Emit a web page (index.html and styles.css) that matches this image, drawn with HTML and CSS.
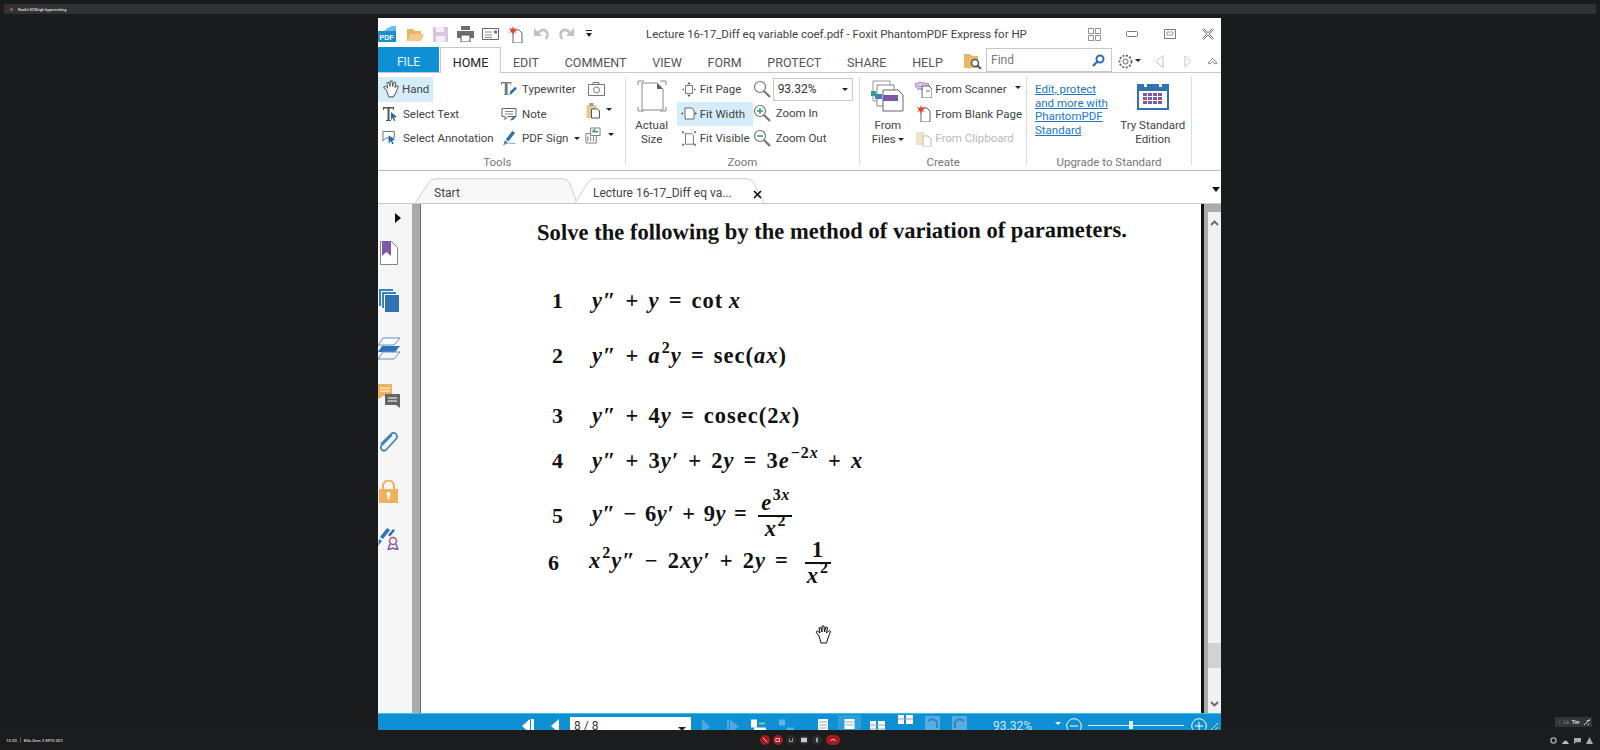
FILE: index.html
```html
<!DOCTYPE html>
<html lang="en">
<head>
    <meta charset="UTF-8">
    <title>Foxit PhantomPDF screen share</title>
    <link rel="stylesheet" href="styles.css">
</head>
<body>
    <div class="meeting-top"><span class="rec-dot"></span><span class="meeting-name">Rachit ECEhigh hypersetting</span></div>

    <div class="stage">
        <div class="window">
            <div class="titlebar">
                <svg class="qa logo" viewBox="0 0 18 16"><path d="M0 5 L10 5 L18 0 L18 16 L0 16Z" fill="#1b8fd0"/><path d="M6 5 Q10 1 14 0 L18 0 L18 5Z" fill="#6fc0e8"/><text x="1.5" y="14" class="logo-text">PDF</text></svg>
                <svg class="qa open" viewBox="0 0 18 16"><path d="M1 3h6l2 2h6v3H5l-3 7H1Z" fill="#e9b566"/><path d="M5 8h13l-3 7H2Z" fill="#f2c98a"/></svg>
                <svg class="qa save" viewBox="0 0 15 16"><path d="M0 1h15v15H0Z" fill="#d9c6de"/><path d="M3 1h8v5H3ZM3 10h9v6H3Z" fill="#f4eef6"/></svg>
                <svg class="qa print" viewBox="0 0 17 16"><path d="M4 0h9v4H4ZM0 5h17v7H0Z" fill="#6d6d6d"/><path d="M4 9h9v7H4Z" fill="#fff" stroke="#555"/></svg>
                <svg class="qa mail" viewBox="0 0 17 14"><path d="M.5 1.500h16v11H.5Z" fill="#fff" stroke="#666"/><path d="M3 5h7M3 8h7M3 10.500h7" stroke="#888"/><path d="M12 3.500h3v3h-3Z" fill="#777"/></svg>
                <svg class="qa new" viewBox="0 0 15 17"><path d="M5 4h6l3 3v10H5Z" fill="#fff" stroke="#666"/><path d="M5 0l1 3 3-1-2 3 2 2-3-1-1 3-1-3-3 1 2-2-2-3 3 1Z" fill="#e2412e"/></svg>
                <svg class="qa undo" viewBox="0 0 17 15"><path d="M5 6 Q9 1 13 4 Q16 7 13 12" fill="none" stroke="#bcc3c9" stroke-width="2.500"/><path d="M1 1v8h8Z" fill="#bcc3c9"/></svg>
                <svg class="qa redo" viewBox="0 0 17 15"><path d="M12 6 Q8 1 4 4 Q1 7 4 12" fill="none" stroke="#bcc3c9" stroke-width="2.500"/><path d="M16 1v8H8Z" fill="#bcc3c9"/></svg>
                <svg class="qa more" viewBox="0 0 6 8"><path d="M0 0h6v1H0ZM0 3h6L3 7Z" fill="#222"/></svg>
                <div class="window-title">Lecture 16-17_Diff eq variable coef.pdf - Foxit PhantomPDF Express for HP</div>
                <div class="window-controls">
                    <svg class="ctl-grid" viewBox="0 0 15 13"><path d="M1.500.5h5v5h-5ZM8.500.5h5v5h-5ZM1.500 7.500h5v5h-5ZM8.500 7.500h5v5h-5Z" fill="none" stroke="#777" stroke-width=".8"/></svg>
                    <svg class="ctl-min" viewBox="0 0 12 6"><rect x=".5" y=".5" width="11" height="5" rx="1" fill="none" stroke="#777"/></svg>
                    <svg class="ctl-max" viewBox="0 0 12 10"><path d="M.5.5h11v9H.5Z" fill="none" stroke="#777"/><path d="M3 3h6v3H3Z" fill="none" stroke="#999"/></svg>
                    <svg class="ctl-close" viewBox="0 0 12 12"><path d="M1 1l10 10M11 1L1 11" stroke="#777" stroke-width="2.400"/><path d="M1 1l10 10M11 1L1 11" stroke="#fff" stroke-width="1"/></svg>
                </div>
            </div>

            <div class="menubar">
                <div class="menu-file">FILE</div>
                <div class="menu-home">HOME</div>
                <div class="menu-items">
                    <span>EDIT</span><span>COMMENT</span><span>VIEW</span><span>FORM</span><span>PROTECT</span><span>SHARE</span><span>HELP</span>
                </div>
                <svg class="find-folder" viewBox="0 0 18 16"><path d="M0 1h6l2 2h6v12H0Z" fill="#e9b566"/><circle cx="11" cy="10" r="3.500" fill="#fff" stroke="#555" stroke-width="1.500"/><path d="M13.500 12.500L17 16" stroke="#555" stroke-width="2"/></svg>
                <div class="find-box"><span>Find</span><svg viewBox="0 0 13 13"><circle cx="8" cy="5" r="3.500" fill="none" stroke="#2b6fb5" stroke-width="2"/><path d="M5.500 7.500L1 12" stroke="#2b6fb5" stroke-width="2.400"/></svg></div>
                <svg class="gear" viewBox="0 0 15 15"><circle cx="7.500" cy="7.500" r="2.500" fill="none" stroke="#666"/><circle cx="7.500" cy="7.500" r="6" fill="none" stroke="#666" stroke-width="1.800" stroke-dasharray="2 1.500"/></svg>
                <span class="tri-down gear-caret"></span>
                <svg class="nav-arrow" viewBox="0 0 9 13"><path d="M8 .5L1 6.500 8 12.500Z" fill="none" stroke="#c4c4c4"/></svg>
                <svg class="nav-arrow next" viewBox="0 0 9 13"><path d="M1 .5L8 6.500 1 12.500Z" fill="none" stroke="#c4c4c4"/></svg>
                <svg class="collapse" viewBox="0 0 11 8"><path d="M1 6l4.500-4.500L10 6l-2 1-2.500-2.500L3 7Z" fill="#fff" stroke="#666" stroke-width=".8"/></svg>
            </div>

            <div class="ribbon">
                <section class="group group-tools">
                    <div class="group-body">
                        <div class="col col-tool">
                            <div class="cmd hand-cmd active"><svg viewBox="0 0 16 16"><path d="M4 9L1.500 6.500 3 5.500 5 7 4.500 2.500 6 2 7.200 6 7.500 1 9 1 9.500 6 10.800 2 12.300 2.500 11.500 7 13 5 14.500 6 12 12 10 15H6Z" fill="#fff" stroke="#666" stroke-width=".9"/></svg>Hand</div>
                            <div class="cmd"><svg viewBox="0 0 16 16"><path d="M1 1h11v3h-1V2.500H7.500V14H9v1H4v-1h1.500V2.500H2V4H1Z" fill="#555"/><path d="M9 6l6 5-3 .6 1.500 3-1.400.4-1.400-3L9 14Z" fill="#1f6db8"/></svg>Select Text</div>
                            <div class="cmd"><svg viewBox="0 0 17 16"><path d="M1 1h12v7h-4l-5 0-3 3Z" fill="#fff" stroke="#666"/><path d="M7 5l7 5-3.200.6 1.600 3.400-1.500.6-1.500-3.300L7 14Z" fill="#1f6db8"/></svg>Select Annotation</div>
                        </div>
                        <div class="col col-type">
                            <div class="cmd"><svg viewBox="0 0 17 17"><path d="M0 1h11v3h-1V2.500H7V14h1v1H3v-1h1V2.500H1V4H0Z" fill="#777"/><path d="M9 15l1-4 5-5 2 2-5 5Z" fill="#2b6fb5"/></svg>Typewriter</div>
                            <div class="cmd"><svg viewBox="0 0 16 15"><path d="M1 2h14v8H7l-3 3v-3H1Z" fill="#fff" stroke="#666"/><path d="M4 5h8M4 7.500h8" stroke="#888"/><path d="M9 14l1.500-2 3-3 1.400 1.400-3 3Z" fill="#2b6fb5"/></svg>Note</div>
                            <div class="cmd"><svg viewBox="0 0 17 17"><path d="M12 1l3 2-7 9-3-2Z" fill="#2b6fb5"/><path d="M4 11l3 2-4 3Z" fill="#2b6fb5"/><path d="M2 16q5-3 8-2t5 0" fill="none" stroke="#8a9ab0"/></svg>PDF Sign<span class="tri-down sign-caret"></span></div>
                        </div>
                        <div class="col col-extra">
                            <svg class="camera" viewBox="0 0 17 14"><path d="M.5 2.500h16v11H.5ZM5 .5h6v2H5Z" fill="#fff" stroke="#777"/><circle cx="8.500" cy="8" r="3" fill="none" stroke="#777"/></svg>
                            <div class="extra-row"><svg viewBox="0 0 15 17"><path d="M1 3h10v13H1Z" fill="#eac78d"/><path d="M4 1h4v3H4Z" fill="#999"/><path d="M6 7h6l2 2v7H6Z" fill="#fff" stroke="#555"/></svg><span class="tri-down"></span></div>
                            <div class="extra-row third"><svg viewBox="0 0 17 16"><path d="M1 6h11v10H1Z" fill="#fff" stroke="#777"/><path d="M3 9v5M6 9v5M9 9v5" stroke="#777"/><path d="M6 0h10v8H6Z" fill="#fff" stroke="#777"/><path d="M8 4h6M8 4l3-3" stroke="#2f9e6b" stroke-width="1.500"/></svg><span class="tri-down"></span></div>
                        </div>
                    </div>
                    <div class="group-label label-tools">Tools</div>
                </section>

                <section class="group group-zoom">
                    <div class="group-body">
                        <div class="big-cmd actual">
                            <svg viewBox="0 0 30 33"><path d="M1 5V1h6M23 1h6v4M1 27v4h6M23 31h6v-4" fill="none" stroke="#888"/><path d="M5 3h15l6 6v21H5Z" fill="#fff" stroke="#888"/><path d="M20 3l6 6h-6Z" fill="#666"/></svg>
                            <div>Actual<br>Size</div>
                        </div>
                        <div class="col col-fit">
                            <div class="cmd"><svg viewBox="0 0 16 17"><path d="M4 4h8v9H4Z" fill="#fff" stroke="#666"/><path d="M8 0l2 2.500H6ZM8 17l2-2.500H6ZM0 8.500L2 7v3ZM16 8.500L14 7v3Z" fill="#555"/></svg>Fit Page</div>
                            <div class="cmd active"><svg viewBox="0 0 16 13"><path d="M4 1h7l2 2v9H4Z" fill="#fff" stroke="#666"/><path d="M0 6.500L2 5v3ZM16 6.500L14 5v3Z" fill="#555"/></svg>Fit Width</div>
                            <div class="cmd"><svg viewBox="0 0 16 17"><path d="M4 3h7l2 2v10H4Z" fill="#fff" stroke="#666"/><path d="M0 0l3 1-2 2ZM16 0l-3 1 2 2ZM0 17l3-1-2-2ZM16 17l-3-1 2-2Z" fill="#555"/></svg>Fit Visible</div>
                        </div>
                        <div class="col col-zoom">
                            <div class="zoom-combo-row">
                                <svg viewBox="0 0 18 18"><circle cx="7" cy="7" r="5.500" fill="#fff" stroke="#777" stroke-width="1.200"/><path d="M11 11l6 6" stroke="#777" stroke-width="2.200"/></svg>
                                <div class="zoom-combo"><span>93.32%</span><span class="tri-down"></span></div>
                            </div>
                            <div class="cmd"><svg viewBox="0 0 18 18"><circle cx="7" cy="7" r="5.500" fill="#fff" stroke="#777" stroke-width="1.200"/><path d="M11 11l6 6" stroke="#777" stroke-width="2.200"/><path d="M4 7h6M7 4v6" stroke="#2f9e6b" stroke-width="1.500"/></svg>Zoom In</div>
                            <div class="cmd"><svg viewBox="0 0 18 18"><circle cx="7" cy="7" r="5.500" fill="#fff" stroke="#777" stroke-width="1.200"/><path d="M11 11l6 6" stroke="#777" stroke-width="2.200"/><path d="M4 7h6" stroke="#2f9e6b" stroke-width="1.500"/></svg>Zoom Out</div>
                        </div>
                    </div>
                    <div class="group-label">Zoom</div>
                </section>

                <section class="group group-create">
                    <div class="group-body">
                        <div class="big-cmd files">
                            <svg viewBox="0 0 33 32"><path d="M2 1h17v20H2Z" fill="#fff" stroke="#999"/><path d="M6 5h17v21H6Z" fill="#fff" stroke="#888"/><path d="M12 10h15l5 5v16H12Z" fill="#fff" stroke="#666"/><path d="M0 11h5v5H0Z" fill="#2f9e8b"/><path d="M4 14h7v5H4Z" fill="#3b83bd"/><path d="M12 15h15v6H12Z" fill="#7e57a8"/></svg>
                            <div>From<br>Files<span class="tri-down files-caret"></span></div>
                        </div>
                        <div class="col col-create">
                            <div class="cmd"><svg viewBox="0 0 17 17"><path d="M0 3l5-2 9 2v3H0Z" fill="#d9c6e6" stroke="#7e57a8" stroke-width=".6"/><path d="M7 5h7l3 3v9H7Z" fill="#fff" stroke="#666"/><path d="M2 8h6M11 10h4" stroke="#7e57a8"/></svg>From Scanner<span class="tri-down scan-caret"></span></div>
                            <div class="cmd"><svg viewBox="0 0 15 17"><path d="M5 3h6l3 3v11H5Z" fill="#fff" stroke="#666"/><path d="M5 0l1 3 3-1-2 3 2 2-3-1-1 3-1-3-3 1 2-2-2-3 3 1Z" fill="#e2412e"/></svg>From Blank Page</div>
                            <div class="cmd disabled"><svg viewBox="0 0 15 17"><path d="M0 2h8v13H0Z" fill="#f1e3c8"/><path d="M7 6h5l3 3v8H7Z" fill="#fff" stroke="#bbb"/></svg>From Clipboard</div>
                        </div>
                    </div>
                    <div class="group-label">Create</div>
                </section>

                <section class="group group-upgrade">
                    <div class="group-body">
                        <a class="upgrade-link">Edit, protect<br>and more with<br>PhantomPDF<br>Standard</a>
                        <div class="big-cmd try">
                            <svg viewBox="0 0 32 28"><path d="M0 2h32v26H0Z" fill="#2f73b5"/><path d="M2 9h28v17H2Z" fill="#fff"/><path d="M7 0h3v5H7ZM22 0h3v5h-3Z" fill="#fff"/><path d="M6 11h4v3H6ZM11 11h4v3h-4ZM16 11h4v3h-4ZM21 11h4v3h-4ZM6 15h4v3H6ZM11 15h4v3h-4ZM16 15h4v3h-4ZM21 15h4v3h-4ZM6 19h4v3H6ZM11 19h4v3h-4ZM16 19h4v3h-4ZM21 19h4v3h-4Z" fill="#7e57a8"/></svg>
                            <div>Try Standard<br>Edition</div>
                        </div>
                    </div>
                    <div class="group-label">Upgrade to Standard</div>
                </section>
            </div>

            <div class="doc-tabs">
                <svg class="tab-shape" viewBox="0 0 357 34" preserveAspectRatio="none"><path d="M0 34L13 8 Q15 1 22 1H146 Q153 1 155 8L162 34" fill="#f8f8f8" stroke="#c8c8c8"/><path d="M160 34L172 8 Q174 1 181 1H330 Q337 1 339 8L349 34" fill="#fff" stroke="#c8c8c8"/></svg>
                <span class="tab-start">Start</span>
                <span class="tab-current">Lecture 16-17_Diff eq va...</span>
                <svg class="tab-close" viewBox="0 0 9 9"><path d="M1 1l7 7M8 1L1 8" stroke="#111" stroke-width="1.700"/></svg>
                <span class="tab-menu"></span>
            </div>

            <div class="workspace">
                <aside class="nav-panel">
                    <span class="panel-toggle"></span>
                    <svg class="nav-bookmark" viewBox="0 0 18 24"><path d="M.5.5h11l6 6v17H.5Z" fill="#fff" stroke="#888"/><path d="M2 0h9v15l-4.500-4L2 15Z" fill="#7e57a8"/></svg>
                    <svg class="nav-pages" viewBox="0 0 20 23"><path d="M0 0h14v2H2v15H0Z" fill="#3b83bd"/><path d="M3 3h14v2H5v14H3Z" fill="#3b83bd"/><path d="M6 6h14v17H6Z" fill="#2f73b5"/></svg>
                    <svg class="nav-layers" viewBox="0 0 22 23"><path d="M5 1h17l-6 7H0Z" fill="#fff" stroke="#5d93c6"/><path d="M4 9h18l-5 6H0Z" fill="#2f73b5"/><path d="M5 15h17l-6 7H0Z" fill="none" stroke="#5d93c6"/></svg>
                    <svg class="nav-comments" viewBox="0 0 22 24"><path d="M0 0h14v12H5l-5 3Z" fill="#eeb25f"/><path d="M2 4h10M2 7h10" stroke="#fff"/><path d="M7 10h15v14l-4-3H7Z" fill="#666"/><path d="M10 14h9M10 17h9" stroke="#fff"/></svg>
                    <svg class="nav-clip" viewBox="0 0 20 22"><path d="M14 3L4 13a3 3 0 0 0 4 5L18 7A3 3 0 0 0 13 2L3 12" fill="none" stroke="#3b83bd" stroke-width="1.700"/></svg>
                    <svg class="nav-lock" viewBox="0 0 19 23"><path d="M4 10V6a5.500 5.500 0 0 1 11 0v4" fill="none" stroke="#eeb25f" stroke-width="2"/><path d="M0 9h19v14H0Z" fill="#eeb25f"/><circle cx="9.500" cy="14" r="2" fill="#fff"/><path d="M8.500 14h2v5h-2Z" fill="#fff"/></svg>
                    <svg class="nav-sign" viewBox="0 0 21 23"><path d="M9 1l3 2-7 9-3-2ZM15 2l2 1.500-5 6-2-1.500Z" fill="#2f73b5"/><path d="M1 12l3 2-4 5Z" fill="#2f73b5"/><circle cx="15" cy="14" r="3.500" fill="#fff" stroke="#b0507a" stroke-width="1.500"/><path d="M12 17l-2 6 5-2 5 2-2-6" fill="none" stroke="#7e57a8" stroke-width="1.500"/></svg>
                </aside>
                <div class="gutter"></div>
                <main class="page">
                    <h1 class="sheet-title">Solve the following by the method of variation of parameters.</h1>
                    <div class="problem p1"><b>1</b><span class="eq"><i>y″</i> + <i>y</i> = cot&#8201;<i>x</i></span></div>
                    <div class="problem p2"><b>2</b><span class="eq"><i>y″</i> + <i>a</i><sup>2</sup><i>y</i> = sec(<i>ax</i>)</span></div>
                    <div class="problem p3"><b>3</b><span class="eq"><i>y″</i> + 4<i>y</i> = cosec(2<i>x</i>)</span></div>
                    <div class="problem p4"><b>4</b><span class="eq"><i>y″</i> + 3<i>y′</i> + 2<i>y</i> = 3<i>e</i><sup>−2<i>x</i></sup> + <i>x</i></span></div>
                    <div class="problem p5"><b>5</b><span class="eq"><i>y″</i> − 6<i>y′</i> + 9<i>y</i> = <span class="frac"><span class="num"><i>e</i><sup>3<i>x</i></sup></span><span class="den"><i>x</i><sup>2</sup></span></span></span></div>
                    <div class="problem p6"><b>6</b><span class="eq"><i>x</i><sup>2</sup><i>y″</i> − 2<i>xy′</i> + 2<i>y</i> = <span class="frac wide"><span class="num">1</span><span class="den"><i>x</i><sup>2</sup></span></span></span></div>
                    <svg class="hand-cursor" viewBox="0 0 17 19"><path d="M4 11L1 7l1.500-1L5 8 4 3l1.800-.5L7 7l.2-6H9l.5 6 1.300-5 1.700.5L11.500 8 14 5.500l1.500 1L13 13l-1.500 5H6Z" fill="#fff" stroke="#111"/></svg>
                </main>
                <div class="page-edge"></div>
                <div class="scrollbar">
                    <svg class="scroll-up" viewBox="0 0 9 6"><path d="M1 5l3.500-3.500L8 5" fill="none" stroke="#666" stroke-width="1.800"/></svg>
                    <div class="scroll-thumb"></div>
                    <svg class="scroll-down" viewBox="0 0 9 6"><path d="M1 1l3.500 3.500L8 1" fill="none" stroke="#666" stroke-width="1.800"/></svg>
                </div>
            </div>

            <div class="statusbar">
                <svg class="st first" viewBox="0 0 12 14"><path d="M8 0v14L0 7Z M9 0h3v14H9Z" fill="#fff"/></svg>
                <svg class="st prev" viewBox="0 0 8 14"><path d="M8 0v14L0 7Z" fill="#fff"/></svg>
                <div class="page-combo"><span>8 / 8</span><span class="tri-down"></span></div>
                <svg class="st next" viewBox="0 0 8 14"><path d="M0 0v14l8-7Z" fill="#4aa9e0"/></svg>
                <svg class="st last" viewBox="0 0 12 14"><path d="M3 0v14l9-7ZM0 0h2v14H0Z" fill="#4aa9e0"/></svg>
                <svg class="st view-a" viewBox="0 0 15 14"><path d="M0 0h6v8H0Z" fill="#fff"/><path d="M3 8h12v6H3Z" fill="#fff"/><path d="M8 4h6" stroke="#7fd07f" stroke-width="2"/></svg>
                <svg class="st view-b" viewBox="0 0 15 14"><path d="M0 0h6v6H0ZM8 8h7v6H8Z" fill="#5fb4e5"/></svg>
                <svg class="st single" viewBox="0 0 10 15"><path d="M0 0h10v15H0Z" fill="#fff"/><path d="M1 3h8M1 6h8M1 9h8M1 12h8" stroke="#8fa6b6"/></svg>
                <div class="st-active"><svg viewBox="0 0 10 10"><path d="M0 0h10v10H0Z" fill="#fff"/><path d="M1 3h8M1 6h8" stroke="#8fa6b6"/></svg></div>
                <svg class="st facing" viewBox="0 0 15 15"><path d="M0 2h6v13H0ZM8 2h7v13H8Z" fill="#fff"/><path d="M0 6h15M0 10h15" stroke="#8fa6b6"/></svg>
                <svg class="st facing-b" viewBox="0 0 15 15"><path d="M0 0h6v9H0ZM8 0h7v9H8Z" fill="#fff"/><path d="M0 4h15" stroke="#8fa6b6"/></svg>
                <svg class="st rot-a" viewBox="0 0 15 15"><path d="M0 0h15v15H0Z" fill="#58ace0"/><path d="M3 5Q8 1 12 6V12" fill="none" stroke="#2f86c2" stroke-width="2"/></svg>
                <svg class="st rot-b" viewBox="0 0 15 15"><path d="M0 0h15v15H0Z" fill="#58ace0"/><path d="M12 5Q7 1 3 6V12" fill="none" stroke="#2f86c2" stroke-width="2"/></svg>
                <span class="zoom-value">93.32%</span>
                <span class="tri-down white"></span>
                <svg class="st z-btn" viewBox="0 0 16 16"><circle cx="8" cy="8" r="7.300" fill="none" stroke="#fff"/><path d="M4 8h8" stroke="#fff"/></svg>
                <div class="slider"><span></span></div>
                <svg class="st z-btn" viewBox="0 0 16 16"><circle cx="8" cy="8" r="7.300" fill="none" stroke="#fff"/><path d="M4 8h8M8 4v8" stroke="#fff"/></svg>
                <svg class="st grip" viewBox="0 0 8 8"><path d="M0 8l8-8M4 8l4-4" stroke="#cfe8f6"/></svg>
            </div>
        </div>

        <div class="float-controls"><span>I</span><span>Ca</span><b>Tim</b><svg viewBox="0 0 7 7"><path d="M0 7l7-7M3 2h4M5 5v2" stroke="#ddd"/></svg></div>
    </div>

    <footer class="meeting-bar">
        <div class="clock"><span>10:20</span><span class="divider"></span><span>BSc Sem 3 MTH 203</span></div>
        <div class="call-buttons">
            <span class="call red"><svg viewBox="0 0 8 8"><path d="M1 1l6 6" stroke="#eee"/></svg></span>
            <span class="call red"><svg viewBox="0 0 8 8"><path d="M1 2h5v4H1Z" fill="none" stroke="#eee"/></svg></span>
            <span class="call dark"><svg viewBox="0 0 8 8"><path d="M2 3v3h4V2" fill="none" stroke="#ccc"/></svg></span>
            <span class="call dark"><svg viewBox="0 0 8 8"><path d="M0 1h8v6H0Z" fill="#ccc"/></svg></span>
            <span class="call dark"><svg viewBox="0 0 8 8"><path d="M4 1v6" stroke="#ccc" stroke-width="2"/></svg></span>
            <span class="call leave"><svg viewBox="0 0 10 6"><path d="M1 4q4-4 8 0" fill="none" stroke="#eee" stroke-width="1.500"/></svg></span>
        </div>
        <div class="tray">
            <svg viewBox="0 0 8 8"><circle cx="4" cy="4" r="3" fill="none" stroke="#aaa" stroke-width="1.500"/></svg>
            <svg viewBox="0 0 8 8"><path d="M0 8q4-8 8 0Z" fill="#bbb"/></svg>
            <svg viewBox="0 0 8 8"><path d="M0 1h8v5H2L0 8Z" fill="#aaa"/></svg>
            <svg viewBox="0 0 8 8"><path d="M4 0l4 8H0Z" fill="#aaa"/></svg>
        </div>
    </footer>
</body>
</html>
```

FILE: styles.css
```css
* {
    box-sizing: border-box;
}

html, body {
    height: 100%;
}

body {
    margin: 0;
    height: 750px;
    overflow: hidden;
    display: flex;
    flex-direction: column;
    background: #191b1d;
    font-family: Roboto, "Noto Sans", sans-serif;
    color: #3c3c3c;
}

svg {
    display: block;
    flex: none;
}

/* meeting chrome */
.meeting-top {
    flex: none;
    height: 10px;
    margin: 4px;
    background: #303233;
    display: flex;
    align-items: center;
    padding-left: 6px;
    gap: 5px;
    color: #ccc;
    font-size: 3.800px;
    font-weight: 700;
}

.rec-dot {
    width: 3px;
    height: 3px;
    border-radius: 50%;
    background: #a65a5a;
}

.stage {
    flex: none;
    height: 712px;
    position: relative;
    padding-left: 378px;
}

.meeting-bar {
    flex: none;
    height: 20px;
    display: flex;
    align-items: center;
    background: #1b1c1e;
    position: relative;
    padding-left: 6px;
}

.clock {
    display: flex;
    align-items: center;
    gap: 3px;
    width: 754px;
    color: #bbb;
    font-size: 4.200px;
    font-weight: 700;
}

.divider {
    width: 1px;
    height: 6px;
    background: #555;
}

.call-buttons {
    display: flex;
    gap: 3px;
    align-items: center;
}

.call {
    width: 10px;
    height: 10px;
    border-radius: 50%;
    display: flex;
    align-items: center;
    justify-content: center;
}

.call svg {
    width: 6px;
    height: 6px;
}

.call.red {
    background: #a31a22;
}

.call.dark {
    background: #2a2b2d;
}

.call.leave {
    width: 14px;
    border-radius: 5px;
    background: #a31a22;
    margin-left: 1px;
}

.tray {
    margin-left: auto;
    margin-right: 7px;
    display: flex;
    gap: 5px;
}

.tray svg {
    width: 7px;
    height: 7px;
}

.float-controls {
    position: absolute;
    right: 8px;
    bottom: 3px;
    width: 37px;
    height: 10px;
    background: #34373a;
    color: #888;
    font-size: 4.500px;
    display: flex;
    align-items: center;
    gap: 3px;
    padding-left: 4px;
}

.float-controls b {
    color: #ddd;
}

.float-controls svg {
    width: 6px;
    height: 6px;
    margin-left: 1px;
}

/* window */
.window {
    width: 843px;
    height: 712px;
    background: #fff;
    display: flex;
    flex-direction: column;
    overflow: hidden;
}

.titlebar {
    flex: none;
    height: 30px;
    padding-top: 2px;
    display: flex;
    align-items: center;
    position: relative;
}

.qa {
    height: 16px;
}

.logo {
    width: 18px;
    margin-right: 10px;
}

.logo-text {
    font: 700 7px "Liberation Sans", sans-serif;
    fill: #fff;
}

.open {
    width: 18px;
    margin-right: 9px;
}

.save {
    width: 15px;
    margin-right: 9px;
}

.print {
    width: 17px;
    margin-right: 8px;
}

.mail {
    width: 17px;
    height: 14px;
    margin-right: 9px;
}

.new {
    width: 15px;
    height: 17px;
    margin-right: 10px;
}

.undo, .redo {
    width: 17px;
    height: 15px;
    margin-right: 8px;
}

.more {
    width: 6px;
    height: 8px;
    margin-left: 3px;
}

.window-title {
    position: absolute;
    left: 268px;
    top: 0;
    line-height: 33px;
    font-size: 11.500px;
    white-space: nowrap;
    color: #444;
}

.window-controls {
    margin-left: auto;
    display: flex;
    align-items: center;
}

.ctl-grid {
    width: 15px;
    height: 13px;
    margin-right: 24px;
}

.ctl-min {
    width: 12px;
    height: 6px;
    margin-right: 26px;
}

.ctl-max {
    width: 12px;
    height: 10px;
    margin-right: 26px;
}

.ctl-close {
    width: 12px;
    height: 12px;
    margin-right: 7px;
}

.menubar {
    flex: none;
    height: 25px;
    display: flex;
    align-items: flex-end;
    border-bottom: 1px solid #c8c8c8;
    position: relative;
}

.menu-file {
    width: 61px;
    height: 25px;
    background: #0f8fd4;
    color: #e8f5fc;
    font-size: 12px;
    line-height: 31px;
    text-align: center;
}

.menu-home {
    width: 61px;
    height: 26px;
    margin: 0 0 -1px 1px;
    border: 1px solid #c8c8c8;
    border-bottom: 0;
    background: #fff;
    color: #222;
    font-size: 12.500px;
    line-height: 29px;
    text-align: center;
}

.menu-items {
    width: 463px;
    height: 25px;
    padding-left: 12px;
    display: flex;
    gap: 25.700px;
    font-size: 12.500px;
    line-height: 31px;
    color: #555;
}

.find-folder {
    width: 18px;
    height: 16px;
    margin: 0 4px 3px 0;
}

.find-box {
    width: 126px;
    height: 24px;
    border: 1px solid #c8c8c8;
    display: flex;
    align-items: center;
    justify-content: space-between;
    padding: 0 6px 0 4px;
    font-size: 12px;
    color: #777;
}

.find-box svg {
    width: 13px;
    height: 13px;
}

.gear {
    width: 15px;
    height: 15px;
    margin: 0 2px 3px 6px;
}

.gear-caret {
    margin-bottom: 10px;
}

.nav-arrow {
    width: 9px;
    height: 13px;
    margin: 0 0 4px 14px;
}

.nav-arrow.next {
    margin-left: 20px;
}

.collapse {
    width: 11px;
    height: 8px;
    margin: 0 0 7px 15px;
}

.tri-down {
    display: inline-block;
    width: 0;
    height: 0;
    border-left: 3px solid transparent;
    border-right: 3px solid transparent;
    border-top: 3px solid #222;
    flex: none;
}

/* ribbon */
.ribbon {
    flex: none;
    height: 98px;
    display: flex;
    border-bottom: 1px solid #bbb;
    padding-right: 29px;
}

.group {
    display: flex;
    flex-direction: column;
    border-right: 1px solid #dcdcdc;
    margin-top: 4px;
    margin-bottom: 5px;
}

.group-tools {
    width: 248px;
}

.group-zoom {
    width: 235px;
}

.group-create {
    width: 167px;
}

.group-upgrade {
    width: 165px;
}

.group-body {
    flex: none;
    height: 76.500px;
    display: flex;
}

.group-label {
    text-align: center;
    font-size: 11.500px;
    line-height: 16px;
    color: #777;
}

.label-tools {
    padding-right: 8px;
}

.col {
    display: flex;
    flex-direction: column;
}

.cmd {
    height: 24.500px;
    flex: none;
    display: flex;
    align-items: center;
    font-size: 11.500px;
    white-space: nowrap;
    color: #444;
}

.cmd svg {
    width: 16px;
    height: 16px;
    margin-right: 5px;
}

.cmd.active {
    background: #d4edf9;
}

.cmd.disabled {
    color: #b9b9b9;
}

.col-tool {
    width: 123px;
}

.hand-cmd {
    width: 55px;
}

.col-tool .cmd {
    padding-left: 4px;
}

.col-tool .hand-cmd svg {
    width: 18px;
    height: 18px;
    margin-right: 2px;
}

.col-type {
    width: 84px;
}

.sign-caret {
    margin-left: 6px;
}

.col-extra {
    padding-top: 5px;
}

.camera {
    width: 17px;
    height: 14px;
    margin: 0 0 6px 3px;
}

.extra-row {
    display: flex;
    gap: 3px;
    height: 25px;
    align-items: flex-start;
}

.extra-row svg {
    width: 16px;
    height: 17px;
}

.extra-row .tri-down {
    margin-top: 6px;
    margin-left: 2px;
}

.extra-row.third .tri-down {
    margin-left: 4px;
}

.big-cmd {
    display: flex;
    flex-direction: column;
    align-items: center;
    text-align: center;
    font-size: 11.500px;
    line-height: 14px;
    color: #444;
}

.actual {
    width: 50px;
    padding-top: 3px;
    margin-left: 1px;
}

.actual svg {
    width: 30px;
    height: 33px;
    margin-bottom: 5px;
}

.col-fit {
    width: 76px;
}

.col-fit .cmd {
    padding-left: 4px;
}

.col-fit .cmd svg {
    width: 16px;
    height: 15px;
    margin-right: 3px;
}

.col-zoom {
    width: 104px;
}

.col-zoom .cmd svg {
    width: 18px;
    height: 18px;
    margin-right: 5px;
}

.zoom-combo-row {
    display: flex;
    align-items: center;
    height: 24px;
    gap: 2px;
}

.zoom-combo-row svg {
    width: 18px;
    height: 18px;
}

.zoom-combo {
    width: 80px;
    height: 23px;
    border: 1px solid #c8c8c8;
    display: flex;
    align-items: center;
    justify-content: space-between;
    padding: 0 4px;
    font-size: 12px;
    color: #333;
}

.files {
    width: 51px;
    margin-left: 2px;
    padding-top: 3px;
}

.files svg {
    width: 33px;
    height: 32px;
    margin-bottom: 6px;
}

.files-caret {
    margin-left: 2px;
    vertical-align: 2px;
}

.col-create {
    padding-left: 2px;
}

.col-create .cmd svg {
    width: 17px;
    height: 17px;
    margin-right: 3px;
}

.scan-caret {
    margin-left: 8px;
    margin-bottom: 4px;
}

.upgrade-link {
    width: 107px;
    padding: 6px 0 0 8px;
    font-size: 11.500px;
    line-height: 13.500px;
    color: #1b78c9;
    text-decoration: underline;
}

.try {
    width: 80px;
    margin-left: -15px;
    padding-top: 5px;
}

.try svg {
    width: 32px;
    height: 28px;
    margin-bottom: 8px;
}

/* document tabs */
.doc-tabs {
    flex: none;
    height: 33px;
    position: relative;
    border-bottom: 1px solid #c8c8c8;
    font-size: 12px;
    line-height: 44px;
    color: #444;
}

.tab-shape {
    position: absolute;
    left: 37px;
    top: 7px;
    width: 357px;
    height: 25px;
}

.tab-start {
    position: absolute;
    left: 56px;
}

.tab-current {
    position: absolute;
    left: 215px;
}

.tab-close {
    position: absolute;
    left: 375px;
    top: 19px;
    width: 9px;
    height: 9px;
}

.tab-menu {
    position: absolute;
    right: 1px;
    top: 16px;
    border-left: 4px solid transparent;
    border-right: 4px solid transparent;
    border-top: 5px solid #111;
}

/* document area */
.workspace {
    flex: none;
    height: 509px;
    display: flex;
}

.nav-panel {
    width: 34px;
    background: #f6f6f6;
    display: flex;
    flex-direction: column;
    padding-top: 9px;
    flex: none;
}

.panel-toggle {
    width: 0;
    height: 0;
    margin: 0 0 18px 17px;
    border-top: 5px solid transparent;
    border-bottom: 5px solid transparent;
    border-left: 6px solid #111;
}

.nav-panel svg {
    margin-bottom: 24px;
}

.nav-bookmark {
    width: 18px;
    height: 24px;
    margin-left: 2px;
}

.nav-pages {
    width: 20px;
    height: 23px;
    margin-left: 1px;
}

.nav-panel .nav-layers {
    width: 22px;
    height: 23px;
    margin-top: 1px;
}

.nav-comments {
    width: 22px;
    height: 24px;
}

.nav-clip {
    width: 20px;
    height: 22px;
}

.nav-panel .nav-lock {
    width: 19px;
    height: 23px;
    margin: 2px 0 24px 1px;
}

.nav-sign {
    width: 21px;
    height: 23px;
}

.gutter {
    flex: none;
    width: 9px;
    background: #ababab;
    border-right: 1px solid #6c6c6c;
}

.page {
    flex: none;
    width: 780px;
    position: relative;
    padding: 14px 0 0 116px;
    background: #fff;
    color: #111;
    font-family: "Liberation Serif", serif;
    font-size: 22.500px;
    font-weight: 700;
}

.sheet-title {
    margin: 0;
    font-size: 22.600px;
    line-height: 30px;
    font-weight: 700;
    white-space: nowrap;
    transform: rotate(-0.3deg);
    transform-origin: left center;
}

.problem {
    display: flex;
    align-items: center;
    height: 30px;
}

.problem b {
    flex: none;
    width: 55px;
    padding-left: 15px;
    font-size: 22px;
}

.eq {
    white-space: nowrap;
    letter-spacing: 1px;
    word-spacing: 2.500px;
}

.eq sup {
    font-size: 16px;
    line-height: 0;
    vertical-align: 10px;
    margin-left: 1px;
}

.p1 {
    margin-top: 38px;
}

.p2 {
    margin-top: 25px;
}

.p3 {
    margin-top: 30px;
}

.p4 {
    margin-top: 15px;
}

.p5 {
    margin-top: 25px;
}

.p5 .eq {
    letter-spacing: 0.5px;
    word-spacing: 2px;
}

.p6 {
    margin-top: 17px;
}

.p6 b {
    padding-left: 11px;
    width: 52px;
}

.frac {
    display: inline-flex;
    flex-direction: column;
    align-items: center;
    vertical-align: middle;
    margin-left: 3px;
    line-height: 24px;
    width: 34px;
}

.frac .num {
    border-bottom: 2px solid #111;
    width: 100%;
    text-align: center;
}

.frac.wide {
    margin-left: 7px;
    width: 26px;
}

.hand-cursor {
    position: absolute;
    left: 394px;
    top: 421px;
    width: 17px;
    height: 19px;
}

.page-edge {
    flex: none;
    width: 8px;
    margin-left: -1px;
    background: linear-gradient(90deg, #111 0 4px, #ababab 4px);
}

.scrollbar {
    flex: none;
    width: 13px;
    background: #f1f1f1;
    border-top: 8px solid #ababab;
    display: flex;
    flex-direction: column;
    align-items: center;
    padding-top: 8px;
}

.scroll-up, .scroll-down {
    width: 9px;
    height: 6px;
}

.scroll-thumb {
    width: 100%;
    height: 25px;
    margin-top: 417px;
    background: #d2d2d2;
}

.scroll-down {
    margin-top: 33px;
}

/* status bar */
.statusbar {
    flex: none;
    height: 17px;
    background: #0f8fd4;
    border-top: 1px solid #34c4e4;
    display: flex;
    align-items: flex-start;
    overflow: hidden;
    padding-top: 5px;
    color: #fff;
    position: relative;
}

.st {
    width: 15px;
    height: 15px;
}

.first {
    width: 12px;
    height: 14px;
    margin-left: 144px;
}

.prev {
    width: 8px;
    height: 14px;
    margin-left: 17px;
}

.page-combo {
    width: 121px;
    height: 16px;
    margin: -2px 0 0 11px;
    background: #fff;
    color: #333;
    font-size: 12px;
    line-height: 19px;
    display: flex;
    align-items: flex-start;
    justify-content: space-between;
    padding: 0 5px 0 4px;
    flex: none;
}

.page-combo .tri-down {
    margin-top: 10px;
    border-left-width: 4px;
    border-right-width: 4px;
    border-top-width: 4px;
}

.next {
    width: 8px;
    margin-left: 11px;
}

.last {
    width: 12px;
    margin-left: 17px;
}

.view-a {
    margin-left: 12px;
}

.view-b {
    margin-left: 13px;
}

.single {
    width: 10px;
    margin-left: 24px;
}

.st-active {
    flex: none;
    width: 23px;
    height: 16px;
    margin: -4px 0 0 10px;
    background: #2d9fdc;
    padding: 4px 0 0 6px;
}

.st-active svg {
    width: 11px;
    height: 10px;
}

.facing {
    margin-left: 9px;
}

.facing-b {
    margin: -4px 0 0 13px;
}

.rot-a {
    margin-left: 12px;
    margin-top: -3px;
}

.rot-b {
    margin-left: 12px;
    margin-top: -3px;
}

.zoom-value {
    width: 62px;
    margin-left: 26px;
    font-size: 12px;
    line-height: 14px;
    color: #cfe8f6;
    white-space: nowrap;
}

.tri-down.white {
    border-top-color: #fff;
    margin-top: 3px;
    margin-right: 5px;
}

.z-btn {
    width: 16px;
    height: 16px;
    margin-top: -1px;
}

.slider {
    width: 96px;
    height: 1px;
    margin: 6px 7px 0 6px;
    background: #cfe8f6;
    position: relative;
}

.slider span {
    position: absolute;
    left: 41px;
    top: -4px;
    width: 4px;
    height: 8px;
    background: #dfeef7;
}

.grip {
    width: 8px;
    height: 8px;
    margin-left: 3px;
    margin-top: 4px;
}
```
